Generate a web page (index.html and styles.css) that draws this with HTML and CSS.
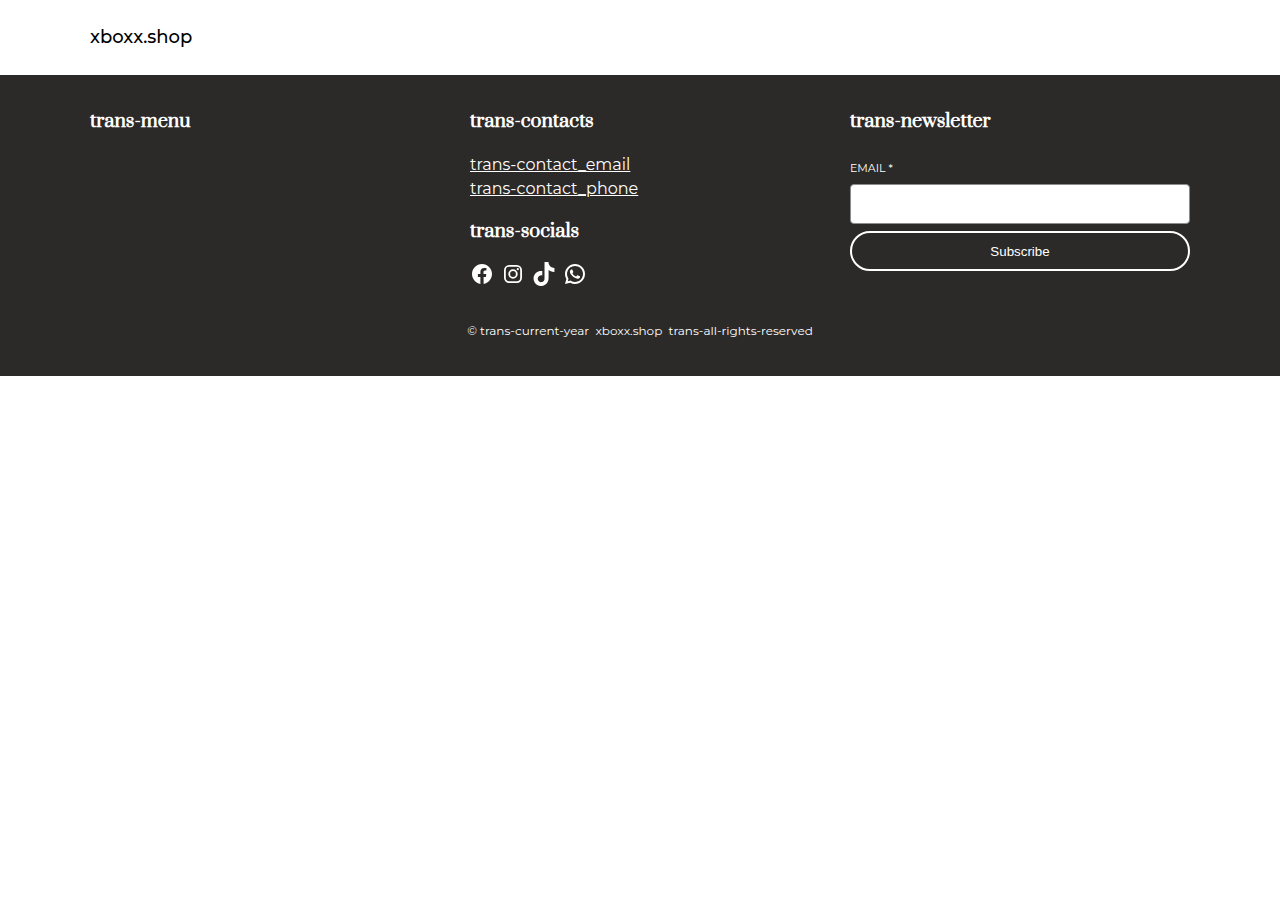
FILE: index.html
```
<!DOCTYPE html>
<html lang="en">
<head>
  <meta charset="UTF-8" />
  <meta name="viewport" content="width=device-width, initial-scale=1.0"/>
  <title>xboxx.shop</title>
  <link rel="stylesheet" href="styles.css">
</head>
<body>
  <header class="header">
    <div class="container">
      <a class="logo" href="#">xboxx.shop</a>
    </div>
  </header>

  <footer class="footer">
    <div class="container">
      <div class="columns">
        <section>
          <h3>trans-menu</h3>
        </section>

        <section>
          <h3>trans-contacts</h3>
          <div class="contacts">
            <a href="#">trans-contact_email</a>
            <a href="#">trans-contact_phone</a>
          </div>
          <h3>trans-socials</h3>
          <div class="socials">
            <a href="#" aria-label="Facebook">
              <svg viewBox="0 0 24 24"><path d="M12 2C6.5 2 2 6.5 2 12c0 5 3.7 9.1 8.4 9.9v-7H7.9V12h2.5V9.8c0-2.5 1.5-3.9 3.8-3.9 1.1 0 2.2.2 2.2.2v2.5h-1.3c-1.2 0-1.6.8-1.6 1.6V12h2.8l-.4 2.9h-2.3v7C18.3 21.1 22 17 22 12c0-5.5-4.5-10-10-10z"/></svg>
            </a>
            <a href="#" aria-label="Instagram">
              <svg viewBox="0 0 24 24"><rect x="3.9" y="3.9" width="16.2" height="16.2" rx="4.3" fill="none" stroke="currentColor" stroke-width="1.8"/><circle cx="12" cy="12" r="3.8" fill="none" stroke="currentColor" stroke-width="1.8"/><circle cx="16.8" cy="7.2" r="1.1"/></svg>
            </a>
            <a href="#" aria-label="TikTok">
              <svg viewBox="0 0 32 32"><path d="M16.708 0.027c1.745-0.027 3.48-0.011 5.213-0.027 0.105 2.041 0.839 4.12 2.333 5.563 1.491 1.479 3.6 2.156 5.652 2.385v5.369c-1.923-0.063-3.855-0.463-5.6-1.291-0.76-0.344-1.468-0.787-2.161-1.24-0.009 3.896 0.016 7.787-0.025 11.667-0.104 1.864-0.719 3.719-1.803 5.255-1.744 2.557-4.771 4.224-7.88 4.276-1.907 0.109-3.812-0.411-5.437-1.369-2.693-1.588-4.588-4.495-4.864-7.615-0.032-0.667-0.043-1.333-0.016-1.984 0.24-2.537 1.495-4.964 3.443-6.615 2.208-1.923 5.301-2.839 8.197-2.297 0.027 1.975-0.052 3.948-0.052 5.923-1.323-0.428-2.869-0.308-4.025 0.495-0.844 0.547-1.485 1.385-1.819 2.333-0.276 0.676-0.197 1.427-0.181 2.145 0.317 2.188 2.421 4.027 4.667 3.828 1.489-0.016 2.916-0.88 3.692-2.145 0.251-0.443 0.532-0.896 0.547-1.417 0.131-2.385 0.079-4.76 0.095-7.145 0.011-5.375-0.016-10.735 0.025-16.093z"/></svg>
            </a>
            <a href="#" aria-label="WhatsApp">
              <svg viewBox="0 0 24 24"><path d="M12 2C6.5 2 2 6.5 2 12c0 1.7.5 3.5 1.4 5L2 22l5.2-1.2c1.5.8 3.1 1.2 4.8 1.2 5.5 0 10-4.5 10-10 0-2.7-1-5.2-2.9-7.1C17.2 3 14.7 2 12 2zm0 2c2.1 0 4.2.8 5.7 2.3C19.2 7.9 20 9.9 20 12c0 4.4-3.6 8-8 8-1.3 0-2.6-.3-3.8-1l-.7-.4-2.7.7.7-2.6-.4-.7C4.4 14.8 4 13.4 4 12c0-4.4 3.6-8 8-8zM8.5 7.4c-.2 0-.5.1-.7.3-.2.3-.9.9-.9 2.1s.9 2.4 1 2.5c.1.2 1.8 2.8 4.3 3.8 2.1.8 2.5.7 3 .6.5 0 1.5-.6 1.7-1.2.2-.6.2-1.1.1-1.2-.1-.1-.2-.2-.5-.3-.2-.1-1.5-.7-1.7-.8-.2-.1-.4-.1-.6.1-.2.3-.6.8-.8 1-.1.2-.3.2-.5.1-.3-.1-1.1-.4-2-1.2-.7-.7-1.2-1.5-1.4-1.7-.1-.3 0-.4.1-.5l.4-.4c.1-.2.2-.3.3-.4.1-.2 0-.3 0-.4-.1-.2-.6-1.4-.8-1.9-.2-.5-.4-.5-.6-.5z"/></svg>
            </a>
          </div>
        </section>

        <section>
          <h3>trans-newsletter</h3>
          <form class="newsletter">
            <label for="email">EMAIL *</label>
            <input type="email" id="email" name="email" required>
            <button type="submit">Subscribe</button>
          </form>
        </section>
      </div>

      <p class="copyright">© trans-current-year &nbsp;xboxx.shop &nbsp;trans-all-rights-reserved</p>
    </div>
  </footer>
</body>
</html>
```
FILE: styles.css
```
:root {
  --dark: #2b2a28;
  --light: #fff;
}

* {
  box-sizing: border-box;
}

body {
  margin: 0;
  font-family: Montserrat, Inter, sans-serif;
  font-size: 16px;
  line-height: 24px;
  color: #000;
  background: var(--light);
}

.container {
  max-width: 1140px;
  margin: 0 auto;
  padding: 0 20px;
}

.header {
  padding: 25px 0 26px;
}

.logo {
  display: block;
  font-size: 18px;
  font-weight: 500;
  color: inherit;
  text-decoration: none;
}

.footer {
  padding: 32px 0;
  background: var(--dark);
  color: var(--light);
}

.footer a {
  color: inherit;
}

.columns {
  display: grid;
  grid-template-columns: repeat(3, 1fr);
  gap: 40px;
}

h3 {
  margin: 0;
  font-family: Prata, "Liberation Serif", serif;
  font-size: 18px;
  line-height: 30px;
  font-weight: bold;
}

.contacts {
  display: flex;
  flex-direction: column;
  align-items: flex-start;
  margin: 16px 0;
}

.socials {
  display: flex;
  gap: 7px;
  margin-top: 15px;
}

.socials svg {
  display: block;
  width: 24px;
  height: 24px;
  fill: currentColor;
}

.newsletter {
  display: flex;
  flex-direction: column;
  margin-top: 22px;
}

.newsletter label {
  font-size: 11px;
  line-height: 18px;
  margin-bottom: 7px;
}

.newsletter input {
  height: 40px;
  margin-bottom: 7px;
  padding: 0 12px;
  border: 1px solid #8c8c8c;
  border-radius: 4px;
  background: var(--light);
}

.newsletter button {
  height: 40px;
  border: 2px solid var(--light);
  border-radius: 20px;
  background: transparent;
  color: inherit;
  cursor: pointer;
}

.copyright {
  margin: 32px 0 0;
  font-size: 12px;
  line-height: 26px;
  text-align: center;
}

@media (max-width: 700px) {
  .columns {
    grid-template-columns: 1fr;
  }
}
```
